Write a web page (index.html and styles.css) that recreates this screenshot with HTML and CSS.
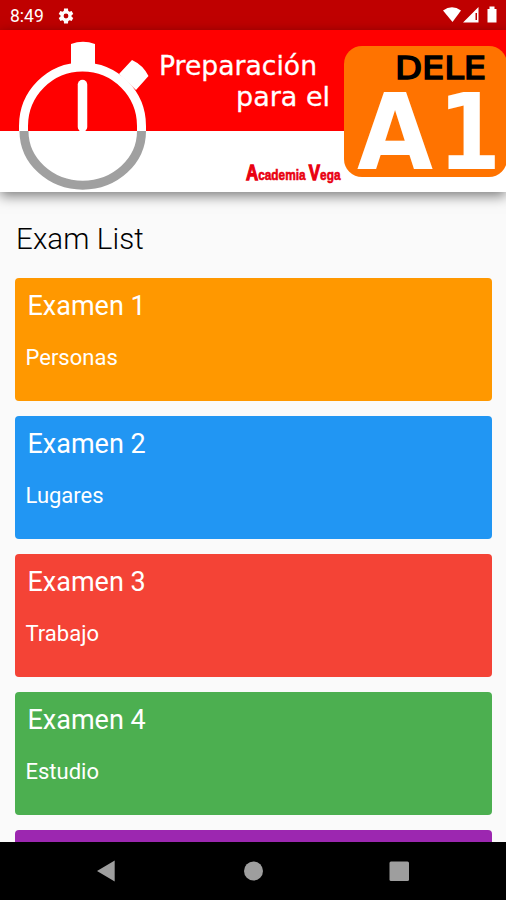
FILE: index.html
```
<!DOCTYPE html>
<html lang="es">
<head>
<meta charset="utf-8">
<title>Preparación para el DELE A1</title>
<link rel="stylesheet" href="styles.css">
</head>
<body>
<div class="app">
  <header class="status">
    <span class="time">8:49</span>
    <svg class="gear" width="18" height="18" viewBox="0 0 24 24"><path fill="#fff" fill-rule="evenodd" d="M19.4 13a7.600 7.600 0 0 0 0-2l2.300-1.800-2.200-3.900-2.800 1.100a7 7 0 0 0-1.700-1L14.600 2H9.400L9 5.400a7 7 0 0 0-1.700 1L4.500 5.300 2.300 9.200 4.600 11a7.600 7.600 0 0 0 0 2l-2.300 1.800 2.200 3.900 2.800-1.100a7 7 0 0 0 1.700 1l.4 3.400h5.200l.4-3.400a7 7 0 0 0 1.700-1l2.800 1.100 2.200-3.900zM12 15.200a3.200 3.200 0 1 1 0-6.400 3.200 3.200 0 0 1 0 6.400z"/></svg>
    <svg class="signals" width="56" height="18" viewBox="0 0 56 18">
      <path fill="#fff" d="M0 4.500Q9 -2 18 4.500L9.500 16z"/>
      <path fill="#fff" fill-rule="evenodd" d="M35.500 1V16.500H20zM32.500 7V14H34V7z"/>
      <path fill="#fff" d="M44.500 3h2V.5h5V3h2v13.500h-9z"/>
    </svg>
  </header>
  <svg class="banner" width="506" height="162" viewBox="0 30 506 162">
    <rect y="30" width="506" height="162" fill="#fff"/>
    <rect y="30" width="506" height="101" fill="#f00"/>
    <path d="M71 44Q83 39.500 95 44V66H71zM132 60Q143 65 148.500 76L136 90 119 74z" fill="#fff"/>
    <path d="M23.500 131V126A59 59 0 0 1 141.500 126V131" fill="none" stroke="#fff" stroke-width="9"/>
    <path d="M24 131A58.750 54.200 0 0 0 141.500 131" fill="none" stroke="#a0a0a0" stroke-width="9"/>
    <path d="M82.500 84.500V127" stroke="#fff" stroke-width="9.500" stroke-linecap="round"/>
    <text class="prep" x="159" y="75" textLength="158" lengthAdjust="spacingAndGlyphs">Preparación</text>
    <text class="prep" x="236" y="106" textLength="94" lengthAdjust="spacingAndGlyphs">para el</text>
    <rect x="344" y="46" width="163" height="131" rx="18" fill="#ff7300"/>
    <text class="dele" x="395" y="78.500" textLength="91" lengthAdjust="spacingAndGlyphs">DELE</text>
    <text class="level" x="357" y="169" textLength="76" lengthAdjust="spacingAndGlyphs">A</text>
    <text class="level" x="438" y="169" textLength="63" lengthAdjust="spacingAndGlyphs">1</text>
    <text class="brand" x="246" y="180" textLength="94.500" lengthAdjust="spacingAndGlyphs"><tspan class="initial">A</tspan>cademia <tspan class="initial">V</tspan>ega</text>
  </svg>
  <main class="content">
    <h1>Exam List</h1>
    <section class="card orange"><h2>Examen 1</h2><p>Personas</p></section>
    <section class="card blue"><h2>Examen 2</h2><p>Lugares</p></section>
    <section class="card red"><h2>Examen 3</h2><p>Trabajo</p></section>
    <section class="card green"><h2>Examen 4</h2><p>Estudio</p></section>
    <section class="card purple"></section>
  </main>
  <nav class="navbar">
    <svg width="506" height="58" viewBox="0 0 506 58" fill="#9e9e9e"><path d="M97 29L114.700 18.500V39.500z"/><circle cx="253.500" cy="29" r="9.500"/><rect x="389.500" y="19.500" width="19.500" height="19.500" rx="1.500"/></svg>
  </nav>
</div>
</body>
</html>
```
FILE: styles.css
```
* { box-sizing: border-box; }
body { margin: 0; font-family: Roboto, sans-serif; }
.app {
  display: flex;
  flex-direction: column;
  width: 506px;
  height: 900px;
  overflow: hidden;
  background: #fafafa;
}
.status {
  display: flex;
  align-items: center;
  flex: 0 0 30px;
  height: 30px;
  padding: 0 8px 0 10px;
  background: #bf0000;
  color: #fff;
}
.time { width: 47px; font-size: 17.5px; line-height: 26px; padding-top: 2px; }
.gear { margin-top: 1px; }
.signals { margin-left: auto; margin-right: -1px; }
.banner {
  display: block;
  flex: none;
  position: relative;
  box-shadow: 0 4px 12px rgba(0, 0, 0, 0.5);
}
.prep { font: 27px "DejaVu Sans", sans-serif; fill: #fff; stroke: #fff; stroke-width: 0.3px; }
.dele { font: 32.5px "DejaVu Sans", sans-serif; fill: #000; stroke: #000; stroke-width: 1.6px; }
.level { font: bold 105px "DejaVu Sans", sans-serif; fill: #fff; }
.brand {
  font: bold 15.5px "Liberation Sans", sans-serif;
  fill: #e90010;
  stroke: #e90010;
  stroke-width: 0.6px;
}
.initial { font-size: 22px; stroke-width: 1.3px; }
.content {
  display: flex;
  flex-direction: column;
  gap: 15px;
  flex: 1;
  min-height: 0;
  padding: 27px 14px 0 15px;
  overflow: hidden;
}
h1 {
  flex: 0 0 44px;
  margin: 0 0 0 1px;
  font-size: 29.5px;
  font-weight: 300;
  line-height: 40px;
  letter-spacing: 0.1px;
  color: #000;
}
.card {
  flex: 0 0 123px;
  padding: 10px 11px 0 10.5px;
  border-radius: 4px;
  color: #fff;
}
h2 {
  margin: 0 0 0 2px;
  font-size: 27px;
  font-weight: 400;
  line-height: 36px;
}
.card p {
  margin: 19px 0 0;
  font-size: 22px;
  line-height: 30px;
}
.orange { background: #ff9800; }
.blue { background: #2196f3; }
.red { background: #f44336; }
.green { background: #4caf50; }
.purple { background: #9c27b0; }
.navbar { flex: 0 0 58px; background: #000; }
.navbar svg { display: block; }
```
